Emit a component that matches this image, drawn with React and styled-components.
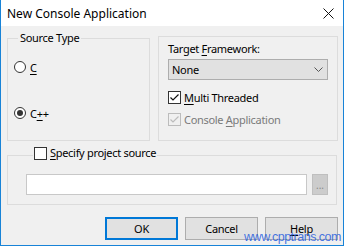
import React from 'react'
import styled, { createGlobalStyle } from 'styled-components'

const GlobalStyle = createGlobalStyle`
  html, body {
    margin: 0;
    padding: 0;
    background: #ffffff;
  }
  * {
    box-sizing: border-box;
  }
`

const uiFont = `"Noto Sans", "Segoe UI", "Liberation Sans", sans-serif`

const Window = styled.div`
  position: relative;
  width: 344px;
  height: 246px;
  display: flex;
  flex-direction: column;
  border: 1px solid #1883d7;
  border-top: none;
  font-family: ${uiFont};
  font-size: 11px;
  letter-spacing: -0.3px;
  color: #000;
  overflow: hidden;
`

const TitleBar = styled.div`
  flex: none;
  height: 26px;
  background: #fff;
  display: flex;
  align-items: center;
  justify-content: space-between;
  padding: 0 9px 0 6px;
`

const Title = styled.span`
  font-size: 12px;
  letter-spacing: 0;
`

const CloseIcon = styled.svg`
  width: 11px;
  height: 11px;
  display: block;
`

const Body = styled.div`
  flex: 1;
  background: #f0f0f0;
  padding: 5px 5px 0 6px;
  display: flex;
  flex-direction: column;
`

const TopRow = styled.div`
  display: grid;
  grid-template-columns: 143px 180px;
  gap: 8px;
  height: 110px;
`

const GroupBox = styled.fieldset`
  margin: 0;
  min-width: 0;
  border: 1px solid #dcdcdc;
  padding: 0;
`

const Legend = styled.legend`
  margin-left: 4px;
  padding: 0 2px;
  line-height: 14px;
`

const SourceGroup = styled(GroupBox)`
  height: 110px;
  padding: 14px 0 0 6px;
  display: flex;
  flex-direction: column;
  gap: 30px;
`

const RadioRow = styled.label`
  display: flex;
  align-items: center;
  gap: 4px;
  height: 16px;
`

const RadioCircle = styled.span`
  width: 12px;
  height: 12px;
  border-radius: 50%;
  border: 1px solid #333;
  background: #fff;
  display: flex;
  align-items: center;
  justify-content: center;

  &::after {
    content: '';
    width: 6px;
    height: 6px;
    border-radius: 50%;
    background: ${p => (p.$checked ? '#333' : 'transparent')};
  }
`

const Key = styled.span`
  text-decoration: underline;
  text-underline-offset: 2px;
  text-decoration-thickness: 1px;
`

const OptionsPanel = styled.div`
  margin-top: 5px;
  height: 105px;
  border: 1px solid #dcdcdc;
  padding: 4px 0 0 9px;
  display: flex;
  flex-direction: column;
`

const FieldLabel = styled.div`
  line-height: 15px;
`

const Select = styled.div`
  margin-top: 3px;
  width: 160px;
  height: 21px;
  background: #e1e1e1;
  border: 1px solid #adadad;
  display: flex;
  align-items: center;
  justify-content: space-between;
  padding: 0 4px 0 3px;
`

const Chevron = styled.svg`
  width: 9px;
  height: 5px;
  display: block;
`

const CheckRow = styled.label`
  display: flex;
  align-items: center;
  gap: 3px;
  height: 15px;
  margin-top: ${p => p.$gap}px;
  color: ${p => (p.$disabled ? '#7a7a7a' : '#000')};
`

const CheckBox = styled.span`
  flex: none;
  width: 13px;
  height: 13px;
  border: 1px solid ${p => (p.$disabled ? '#bcbcbc' : '#333')};
  background: ${p => (p.$disabled ? '#f0f0f0' : '#fff')};
  display: flex;
  align-items: center;
  justify-content: center;
`

const CheckMark = styled.svg`
  width: 11px;
  height: 11px;
  display: block;
`

const ProjectGroup = styled(GroupBox)`
  margin: 5px 1px 0 0;
  height: 59px;
  padding: 10px 8px 0 18px;
  display: flex;
  align-items: flex-start;
  gap: 5px;
`

const CheckLegend = styled.legend`
  margin-left: 7px;
  padding: 0 1px 4px;
  height: 18px;
  display: flex;
  align-items: center;
  gap: 3px;
  line-height: 14px;
`

const PathInput = styled.div`
  flex: 1;
  height: 21px;
  background: #fff;
  border: 1px solid #c8c8c8;
`

const BrowseButton = styled.div`
  flex: none;
  width: 16px;
  height: 21px;
  background: #cccccc;
  border: 1px solid #bfbfbf;
  color: #8a8a8a;
  display: flex;
  align-items: flex-end;
  justify-content: center;
  font-size: 10px;
  letter-spacing: 0;
  line-height: 14px;
  padding-bottom: 2px;
`

const ButtonRow = styled.div`
  display: flex;
  justify-content: flex-end;
  gap: 7px;
  margin-top: 12px;
`

const Button = styled.button`
  width: 73px;
  height: 23px;
  padding: 0;
  background: #e1e1e1;
  border: ${p => (p.$default ? '2px solid #0078d7' : '1px solid #adadad')};
  font-family: ${uiFont};
  font-size: 11px;
  letter-spacing: -0.3px;
  color: #000;
`

const Watermark = styled.span`
  position: absolute;
  right: 2px;
  bottom: 1px;
  font-family: "Liberation Sans", Arial, sans-serif;
  font-size: 12.5px;
  letter-spacing: -0.5px;
  line-height: 13px;
  color: rgba(38, 92, 222, 0.85);
  pointer-events: none;
`

const Check = ({ color }) => (
  <CheckMark viewBox="0 0 11 11">
    <polyline points="1.5,5.5 4,8 9.5,2.5" fill="none" stroke={color} strokeWidth="1.2" />
  </CheckMark>
)

const App = () => {
  return (
    <>
      <GlobalStyle />
      <Window>
        <TitleBar>
          <Title>New Console Application</Title>
          <CloseIcon viewBox="0 0 11 11">
            <path d="M0.5 0.5 L10.5 10.5 M10.5 0.5 L0.5 10.5" stroke="#111" strokeWidth="1" />
          </CloseIcon>
        </TitleBar>

        <Body>
          <TopRow>
            <SourceGroup>
              <Legend>Source Type</Legend>
              <RadioRow>
                <RadioCircle />
                <Key>C</Key>
              </RadioRow>
              <RadioRow>
                <RadioCircle $checked />
                <span>C<Key>+</Key>+</span>
              </RadioRow>
            </SourceGroup>

            <OptionsPanel>
              <FieldLabel>Target <Key>F</Key>ramework:</FieldLabel>
              <Select>
                <span>None</span>
                <Chevron viewBox="0 0 9 5">
                  <polyline points="0.5,0.5 4.5,4.5 8.5,0.5" fill="none" stroke="#555" strokeWidth="1" />
                </Chevron>
              </Select>
              <CheckRow $gap={10}>
                <CheckBox>
                  <Check color="#111" />
                </CheckBox>
                <span><Key>M</Key>ulti Threaded</span>
              </CheckRow>
              <CheckRow $gap={7} $disabled>
                <CheckBox $disabled>
                  <Check color="#bcbcbc" />
                </CheckBox>
                <span>Console <Key>A</Key>pplication</span>
              </CheckRow>
            </OptionsPanel>
          </TopRow>

          <ProjectGroup>
            <CheckLegend>
              <CheckBox />
              <span><Key>S</Key>pecify project source</span>
            </CheckLegend>
            <PathInput />
            <BrowseButton>...</BrowseButton>
          </ProjectGroup>

          <ButtonRow>
            <Button $default>OK</Button>
            <Button>Cancel</Button>
            <Button><Key>H</Key>elp</Button>
          </ButtonRow>
        </Body>

        <Watermark>www.cpptrans.com</Watermark>
      </Window>
    </>
  )
}

export default App
